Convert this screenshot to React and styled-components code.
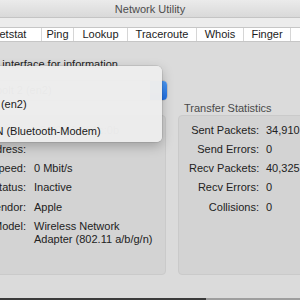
import styled, { createGlobalStyle } from "styled-components";

const GlobalStyle = createGlobalStyle`
  * {
    box-sizing: border-box;
  }
  html,
  body {
    margin: 0;
    width: 300px;
    height: 300px;
    overflow: hidden;
    background: #dbdbdb;
  }
`;

const tabs = [
  { name: "Info", w: 40 },
  { name: "Netstat", w: 65 },
  { name: "Ping", w: 32 },
  { name: "Lookup", w: 54 },
  { name: "Traceroute", w: 69 },
  { name: "Whois", w: 47 },
  { name: "Finger", w: 47 },
  { name: "Port Scan", w: 68 },
];

const interfaces = ["Wi-Fi (en0)", "Thunderbolt 2 (en2)", "Bluetooth DUN (Bluetooth-Modem)"];

const info = [
  ["Hardware Address:", "a8:20:66:3f:1c:0b"],
  ["IP Address:", ""],
  ["Link Speed:", "0 Mbit/s"],
  ["Link Status:", "Inactive"],
  ["Vendor:", "Apple"],
  ["Model:", "Wireless Network Adapter (802.11 a/b/g/n)"],
];

const transfer = [
  ["Sent Packets:", "34,910"],
  ["Send Errors:", "0"],
  ["Recv Packets:", "40,325"],
  ["Recv Errors:", "0"],
  ["Collisions:", "0"],
];

const App = () => {
  return (
    <>
      <GlobalStyle />
      <Window>
        <TitleBar>Network Utility</TitleBar>
        <TabArea>
          <TabGroup>
            {tabs.map((t) => (
              <Tab key={t.name} $w={t.w}>
                {t.name}
              </Tab>
            ))}
          </TabGroup>
        </TabArea>

        <Content>
          <Prompt>Select a network interface for information</Prompt>
          <PopupRow>
            <PopupButton>
              <PopupLabel>Thunderbolt 2 (en2)</PopupLabel>
              <PopupArrow />
            </PopupButton>
          </PopupRow>

          <Columns>
            <Group>
              <GroupTitle>Interface Information</GroupTitle>
              <GroupBox $cols="155px 124px" $gap="8px">
                {info.map(([label, value]) => (
                  <Row key={label}>
                    <Label>{label}</Label>
                    <Value>{value}</Value>
                  </Row>
                ))}
              </GroupBox>
            </Group>
            <Group>
              <GroupTitle>Transfer Statistics</GroupTitle>
              <GroupBox $cols="70px 70px" $gap="7px">
                {transfer.map(([label, value]) => (
                  <Row key={label}>
                    <Label>{label}</Label>
                    <Value>{value}</Value>
                  </Row>
                ))}
              </GroupBox>
            </Group>
          </Columns>

          <Menu>
            {interfaces.map((item) => (
              <MenuItem key={item}>{item}</MenuItem>
            ))}
          </Menu>
        </Content>
        <Footer />
      </Window>
    </>
  );
};
export default App;

const Window = styled.div`
  width: 520px;
  height: 300px;
  margin-left: -160px;
  display: flex;
  flex-direction: column;
  background: #ececec;
  font-family: "Liberation Sans", Arial, sans-serif;
  font-size: 11px;
  color: #222;
`;

const TitleBar = styled.div`
  height: 18px;
  padding-left: 100px;
  display: flex;
  align-items: center;
  justify-content: center;
  background: linear-gradient(#ebebeb, #d9d9d9);
  border-bottom: 1px solid #c4c4c4;
  color: #4d4d4d;
`;

const TabArea = styled.div`
  padding-top: 9px;
  background: #ececec;
`;

const TabGroup = styled.div`
  display: flex;
  margin-left: 96px;
  background: #fff;
  border-top: 1px solid #c6c6c6;
  border-bottom: 1px solid #c6c6c6;
`;

const Tab = styled.div`
  width: ${(p) => p.$w}px;
  height: 13px;
  line-height: 13px;
  text-align: center;
  white-space: nowrap;
  color: #1c1c1c;
  border-left: 1px solid #d6d6d6;

  &:first-child {
    border-left: none;
  }
`;

const Content = styled.div`
  position: relative;
  flex: 1;
  display: flex;
  flex-direction: column;
  padding: 16px 20px 23px;
  background: #dbdbdb;
`;

const Prompt = styled.div`
  margin-left: 58px;
  line-height: 13px;
  white-space: nowrap;
`;

const PopupRow = styled.div`
  width: 307px;
  height: 19px;
  margin-top: 10px;
  display: flex;
  justify-content: flex-end;
`;

const PopupButton = styled.div`
  width: 220px;
  display: flex;
  background: #fff;
  border-radius: 4px;
  overflow: hidden;
  box-shadow: 0 0 0 0.5px rgba(0, 0, 0, 0.2);
`;

const PopupLabel = styled.div`
  flex: 1;
  padding-left: 8px;
  line-height: 19px;
`;

const PopupArrow = styled.div`
  width: 17px;
  background: linear-gradient(#4d9bf8, #1f6fe5);
`;

const Columns = styled.div`
  margin-top: 2px;
  display: grid;
  grid-template-columns: 306px 162px;
  column-gap: 12px;
`;

const Group = styled.div`
  display: flex;
  flex-direction: column;
`;

const GroupTitle = styled.div`
  line-height: 13px;
  padding-left: 6px;
  color: #4a4a4a;
  white-space: nowrap;
`;

const GroupBox = styled.div`
  height: 160px;
  padding: 7.5px 0 0 10px;
  display: grid;
  grid-template-columns: ${(p) => p.$cols};
  column-gap: ${(p) => p.$gap};
  row-gap: 6.3px;
  align-content: start;
  background: #d3d3d3;
  border: 1px solid #cacaca;
  border-radius: 4px;
`;

const Row = styled.div`
  display: contents;
`;

const Label = styled.div`
  line-height: 13px;
  text-align: right;
  white-space: nowrap;
`;

const Value = styled.div`
  line-height: 13px;
`;

const Menu = styled.div`
  position: absolute;
  left: 80px;
  top: 24px;
  width: 242px;
  padding: 1px 0;
  display: flex;
  flex-direction: column;
  gap: 7px;
  background: rgba(237, 237, 237, 0.98);
  border-radius: 5px;
  box-shadow: 0 4px 12px rgba(0, 0, 0, 0.25), 0 0 0 0.5px rgba(0, 0, 0, 0.15);
`;

const MenuItem = styled.div`
  height: 20px;
  line-height: 20px;
  padding-left: 10px;
  white-space: nowrap;
  color: #1a1a1a;
`;

const Footer = styled.div`
  height: 2px;
  background: linear-gradient(to right, #3a3a3a 366px, #9e9e9e 366px);
`;
